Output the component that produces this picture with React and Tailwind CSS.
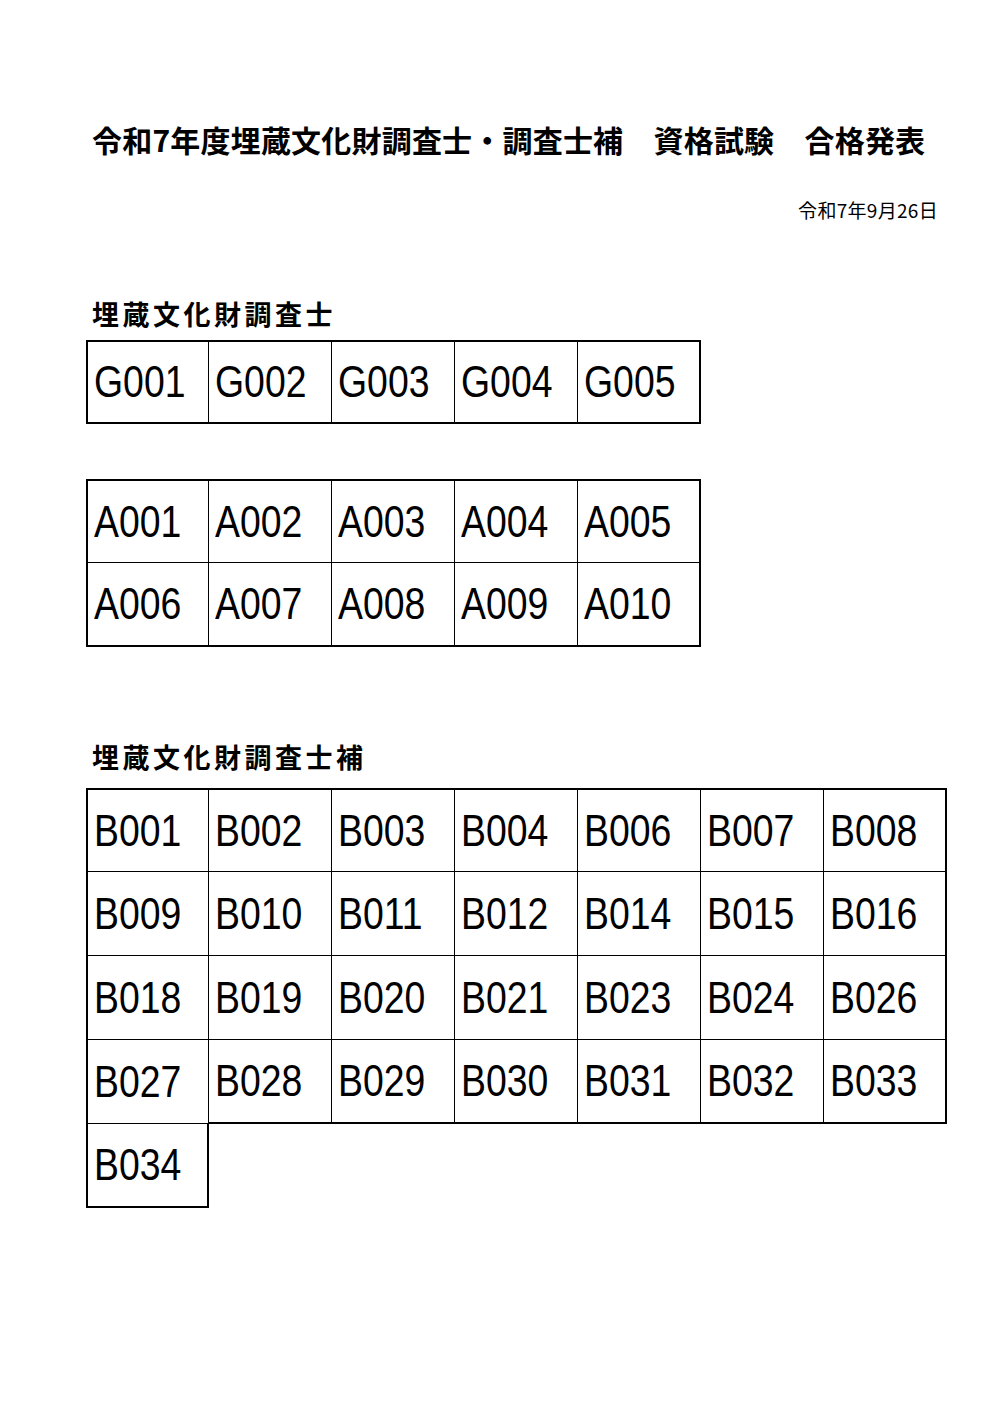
const gCodes = [['G001', 'G002', 'G003', 'G004', 'G005']];
const aCodes = [
  ['A001', 'A002', 'A003', 'A004', 'A005'],
  ['A006', 'A007', 'A008', 'A009', 'A010'],
];
const bCodes = [
  ['B001', 'B002', 'B003', 'B004', 'B006', 'B007', 'B008'],
  ['B009', 'B010', 'B011', 'B012', 'B014', 'B015', 'B016'],
  ['B018', 'B019', 'B020', 'B021', 'B023', 'B024', 'B026'],
  ['B027', 'B028', 'B029', 'B030', 'B031', 'B032', 'B033'],
  ['B034'],
];

const jp = { fontFamily: '"Noto Sans CJK JP", "Noto Sans", sans-serif' };

// each cell draws its right and bottom line; outer edges get the heavier 2px line
function CodeTable({ rows }) {
  return (
    <div className="flex flex-col">
      {rows.map((row, i) => (
        <div key={i} className="flex">
          {row.map((code, j) => {
            const top = i === 0 ? 'border-t-2' : '';
            const left = j === 0 ? 'border-l-2' : '';
            const right = j === row.length - 1 ? 'border-r-2' : 'border-r-[1.5px]';
            const isBottom = i === rows.length - 1 || rows[i + 1].length <= j;
            const bottom = isBottom ? 'border-b-2' : 'border-b-[1.5px]';
            return (
              <div
                key={code}
                className={`w-[123px] h-[84px] border-black flex items-center pl-[6px] ${top} ${left} ${right} ${bottom}`}
              >
                <span className="inline-block origin-left scale-x-[0.85] text-[44px] leading-none text-black font-['Liberation_Sans',Arial,sans-serif]">
                  {code}
                </span>
              </div>
            );
          })}
        </div>
      ))}
    </div>
  );
}

export default function App() {
  return (
    <div className="w-[1000px] h-[1414px] bg-white text-black pl-[86px] pt-[117px]" style={jp}>
      {/* Title */}
      <h1 className="pl-[6px] text-[30px] font-bold leading-[44px] tracking-[0.2px] whitespace-nowrap">
        令和7年度埋蔵文化財調査士・調査士補　資格試験　合格発表
      </h1>
      <p className="mt-[37px] pr-[62px] text-right text-[19px] leading-[24px] tracking-[0.3px]">令和7年9月26日</p>

      {/* 埋蔵文化財調査士 */}
      <h2 className="mt-[74px] pl-[6px] text-[27px] font-bold leading-[36px] tracking-[3.5px]">埋蔵文化財調査士</h2>
      <div className="mt-[8px]">
        <CodeTable rows={gCodes} />
      </div>
      <div className="mt-[55px]">
        <CodeTable rows={aCodes} />
      </div>

      {/* 埋蔵文化財調査士補 */}
      <h2 className="mt-[92px] pl-[6px] text-[27px] font-bold leading-[36px] tracking-[3.5px]">埋蔵文化財調査士補</h2>
      <div className="mt-[13px]">
        <CodeTable rows={bCodes} />
      </div>
    </div>
  );
}
